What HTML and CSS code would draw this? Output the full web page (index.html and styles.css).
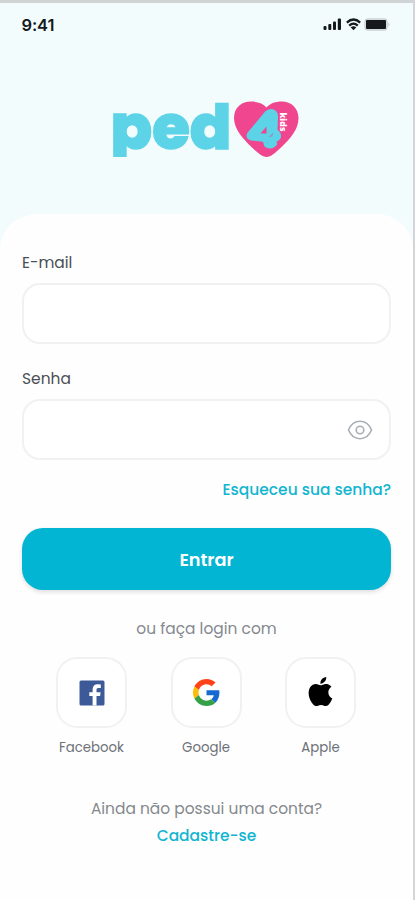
FILE: index.html
```html
<!DOCTYPE html>
<html lang="pt-BR">
<head>
<meta charset="utf-8">
<meta name="viewport" content="width=device-width, initial-scale=1">
<title>ped4kids</title>
<link rel="stylesheet" href="styles.css">
</head>
<body>
<main class="screen">
  <header class="statusbar">
    <span class="time">9:41</span>
    <svg class="status-icons" width="68" height="14" viewBox="0 0 68 14">
      <g fill="#15191b">
        <rect x="0.5" y="9" width="3" height="4" rx="1"/>
        <rect x="5.3" y="7" width="3" height="6" rx="1"/>
        <rect x="10" y="4.5" width="3" height="8.500" rx="1"/>
        <rect x="14.800" y="1.500" width="3.200" height="11.500" rx="1"/>
        <path d="M30.500 13.200 L33.300 10.300 Q30.500 8.300 27.700 10.300 Z"/>
        <rect x="43" y="3" width="20" height="9" rx="1"/>
      </g>
      <g fill="none" stroke="#15191b" stroke-width="2.200">
        <path d="M23.800 5.600 Q30.500 -0.600 37.200 5.600"/>
        <path d="M26.200 8.600 Q30.500 4.600 34.800 8.600"/>
      </g>
      <rect x="42" y="2" width="22" height="11" rx="2.500" fill="none" stroke="#b5bbbc" stroke-width="1"/>
      <path d="M65.500 5.500 Q67.500 7.500 65.500 9.500Z" fill="#b5bbbc"/>
    </svg>
  </header>
  <div class="brand">
    <svg width="190" height="72" viewBox="0 0 190 72" role="img" aria-label="ped4kids">
      <text class="wordmark" x="-1.500" y="48.500" textLength="121" lengthAdjust="spacingAndGlyphs">ped</text>
      <rect x="0" y="57" width="30" height="14" fill="#f2fcfd"/>
      <path fill="#f0468f" d="M154.500 57 C150 57 146 53 140 47.500 C131 39 122 29 122 18 C122 7 130 1.500 139 1.500 C146 1.500 151 3.500 154.500 7.500 C158 3.500 163 1.500 170 1.500 C179 1.500 186.500 8 186.500 18 C186.500 29 179 38 169 47.500 C163 53 159 57 154.500 57Z"/>
      <path fill="#5dd3e7" stroke="#5dd3e7" stroke-width="4" stroke-linejoin="round" d="M154.500 13 Q158 9.500 162 12 Q164 13 164 17 L163.500 31 Q167.500 33 167 37 Q166 39.500 162.500 40 L163 44 Q159 48.500 154 45 L152.500 40 L139 38.500 Q135 37 137.500 33.500 Z"/>
      <path fill="#f0468f" d="M154.500 26.500 V33.500 H148.500 Z"/>
      <path d="M157.500 36.500 Q160.500 36.500 160.500 33.500" fill="none" stroke="#b96bb0" stroke-width="1"/>
      <text class="kids" transform="translate(167.500 12.500) rotate(90)" textLength="19" lengthAdjust="spacingAndGlyphs">kids</text>
    </svg>
  </div>
  <form class="sheet">
    <label for="email">E-mail</label>
    <input class="field" id="email" type="email">
    <label class="second" for="senha">Senha</label>
    <div class="password">
      <input class="field" id="senha" type="password">
      <svg class="eye" width="26" height="22" viewBox="0 0 26 22" fill="none" stroke="#a9afb4" stroke-width="1.600">
        <path d="M1.500 11 C4 5 8 2.300 13 2.300 S22 5 24.500 11 C22 17 18 19.700 13 19.700 S4 17 1.500 11Z"/>
        <circle cx="13" cy="11" r="3.800"/>
      </svg>
    </div>
    <a class="forgot">Esqueceu sua senha?</a>
    <button class="submit" type="button">Entrar</button>
    <p class="or">ou faça login com</p>
    <div class="socials">
      <div class="social">
        <span class="tile"><svg width="26" height="26" viewBox="0 0 26 26"><rect x="0.500" y="0.500" width="25" height="25" rx="1.500" fill="#3d5a98"/><path fill="#fff" d="M13.600 25.500 V16 H10.300 V12.200 H13.600 V9.300 C13.600 6 15.600 4.200 18.600 4.200 L21.800 4.400 V7.900 H19.500 C17.900 7.900 17.500 8.700 17.500 9.900 V12.200 H21.600 L21.100 16 H17.500 V25.500Z"/></svg></span>
        <span>Facebook</span>
      </div>
      <div class="social">
        <span class="tile"><svg width="27" height="27" viewBox="0 0 48 48"><path fill="#ff4218" d="M24 9.500c3.540 0 6.710 1.220 9.210 3.600l6.850-6.850C35.900 2.380 30.470 0 24 0 14.620 0 6.510 5.380 2.560 13.220l7.980 6.190C12.430 13.720 17.740 9.500 24 9.500z"/><path fill="#1769d2" d="M46.980 24.550c0-1.570-.15-3.090-.38-4.550H24v9.020h12.940c-.58 2.960-2.260 5.480-4.780 7.180l7.730 6c4.510-4.180 7.090-10.360 7.090-17.650z"/><path fill="#fbbd07" d="M10.530 28.590c-.48-1.450-.76-2.990-.76-4.590s.27-3.140.76-4.590l-7.980-6.190C.92 16.460 0 20.120 0 24c0 3.880.92 7.540 2.560 10.780l7.970-6.190z"/><path fill="#35a046" d="M24 48c6.480 0 11.930-2.130 15.890-5.810l-7.730-6c-2.150 1.450-4.920 2.300-8.160 2.300-6.260 0-11.570-4.220-13.470-9.910l-7.980 6.190C6.510 42.620 14.620 48 24 48z"/></svg></span>
        <span>Google</span>
      </div>
      <div class="social">
        <span class="tile"><svg class="apple-mark" width="35" height="35" viewBox="0 0 24 24"><path d="M18.710 19.500c-.83 1.240-1.710 2.450-3.050 2.470-1.340.03-1.770-.79-3.290-.79-1.530 0-2 .77-3.270.82-1.310.05-2.300-1.320-3.140-2.530C4.250 17 2.940 12.450 4.700 9.390c.87-1.520 2.430-2.480 4.120-2.510 1.280-.02 2.500.87 3.290.87.780 0 2.260-1.070 3.810-.91.650.03 2.470.26 3.640 1.980-.09.060-2.170 1.280-2.150 3.810.03 3.020 2.650 4.030 2.680 4.040-.03.070-.42 1.440-1.380 2.830M13 3.500c.73-.83 1.940-1.460 2.940-1.500.13 1.170-.34 2.350-1.040 3.190-.69.850-1.830 1.510-2.950 1.420-.15-1.150.41-2.350 1.050-3.110z"/></svg></span>
        <span>Apple</span>
      </div>
    </div>
    <p class="ask">Ainda não possui uma conta?</p>
    <a class="signup">Cadastre-se</a>
  </form>
</main>
</body>
</html>
```
FILE: styles.css
```css
* { box-sizing: border-box; margin: 0; }
body {
  font-family: Poppins, "Open Sans", sans-serif;
  font-size: 15.45px;
  line-height: 20px;
  color: #4b4e55;
}
.screen {
  height: 900px;
  overflow: hidden;
  border-top: 3px solid #d0d4d5;
  border-right: 2px solid #d3d5d6;
  background: #f2fcfd;
}
.statusbar {
  display: flex;
  justify-content: space-between;
  padding: 12px 22px 0 21.5px;
  height: 97px;
}
.time {
  font-family: Inter, sans-serif;
  font-weight: 600;
  font-size: 16.5px;
  letter-spacing: -0.1px;
  color: #15191b;
}
.status-icons { margin-top: 2px; }
.brand { height: 114px; padding-left: 112px; }
.brand svg { display: block; overflow: visible; }
.wordmark {
  font: 800 62px Poppins, "Open Sans", sans-serif;
  fill: #5dd3e7;
  stroke: #5dd3e7;
  stroke-width: 1.5px;
}
.kids { font: 800 9px "Open Sans", sans-serif; fill: #fff; }
.sheet {
  display: flex;
  flex-direction: column;
  height: 686px;
  padding: 39px 22px 0;
  border-radius: 36px 36px 0 0;
  background: #fefefe;
}
.field {
  display: block;
  width: 100%;
  height: 61px;
  margin-top: 10px;
  padding: 0 20px;
  border: 2px solid #f0f1f1;
  border-radius: 18px;
  background: #fff;
  font: inherit;
}
.second { margin-top: 25px; }
.password { position: relative; }
.eye { position: absolute; right: 18px; top: 30px; }
.forgot {
  align-self: flex-end;
  margin-top: 20px;
  font-weight: 500;
  color: #12b5d0;
}
.submit {
  height: 62px;
  margin-top: 28px;
  padding-top: 2px;
  border: 0;
  border-radius: 21px;
  background: #02b5d3;
  box-shadow: 0 2px 4px rgba(0, 0, 0, 0.13);
  color: #fff;
  font: inherit;
  font-size: 17.7px;
  font-weight: 600;
}
.or { margin-top: 29px; text-align: center; color: #858990; }
.socials {
  display: flex;
  justify-content: space-between;
  width: 300px;
  margin: 18px 0 0 34px;
}
.social {
  display: flex;
  flex-direction: column;
  align-items: center;
  gap: 10px;
  width: 71px;
  font-size: 13.3px;
  color: #6d7178;
  white-space: nowrap;
}
.tile {
  display: grid;
  place-items: center;
  width: 71px;
  height: 71px;
  border: 2px solid #f0f2f2;
  border-radius: 21px;
  background: #fff;
}
.apple-mark { margin-top: -2px; }
.ask { margin-top: 41px; text-align: center; color: #85898c; }
.signup {
  margin-top: 7px;
  text-align: center;
  font-weight: 500;
  color: #12b5d0;
}
```
